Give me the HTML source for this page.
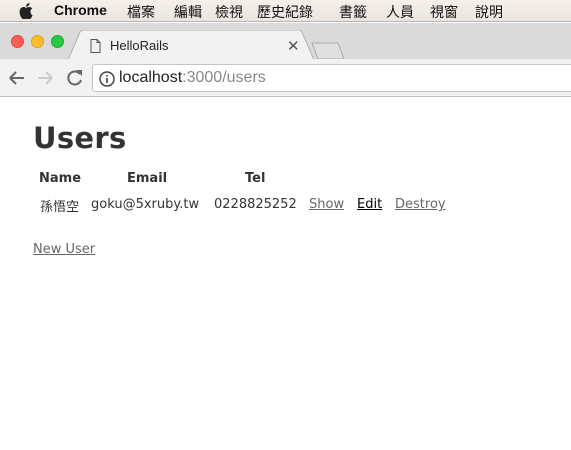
<!DOCTYPE html>
<html><head><meta charset="utf-8">
<style>
*{margin:0;padding:0;box-sizing:border-box}
body{width:571px;height:450px;overflow:hidden;background:#fff;font-family:"DejaVu Sans","Noto Sans CJK TC",sans-serif;position:relative}
.menu{position:absolute;left:0;top:0;width:571px;height:22px;background:linear-gradient(#f6f0ea,#ebe5df);border-bottom:1px solid #b8b4b0;font-family:"Liberation Sans","Noto Sans CJK TC",sans-serif;font-size:14px;color:#111}
.menu span{position:absolute;top:2px}
.tabs{position:absolute;left:0;top:23px;width:571px;height:37px;background:#dadada}
.toolbar{position:absolute;left:0;top:59px;width:571px;height:38px;background:#f2f2f2;border-bottom:1px solid #c0c0c0}
.dot{position:absolute;top:35px;width:13px;height:13px;border-radius:50%}
.addr{position:absolute;left:92px;top:64px;width:485px;height:28px;background:#fff;border:1px solid #c4c4c4;border-radius:3px;font-family:"Liberation Sans",sans-serif;font-size:16px;color:#222}
.page{position:absolute;left:0;top:97px;color:#333}
h1{position:absolute;left:33px;top:24px;font-size:29px;font-weight:bold;white-space:nowrap;letter-spacing:0.3px}
.t{position:absolute;font-size:13px;white-space:nowrap}
.b{font-weight:bold}
a{color:#666;text-decoration:underline}
</style></head><body>
<div class="menu">
<svg style="position:absolute;left:19px;top:3px" width="14" height="16" viewBox="0 0 14 16"><path d="M11.5 8.5c0-2 1.6-2.9 1.7-3-1-1.4-2.4-1.5-2.9-1.5-1.2-.1-2.4.7-3 .7s-1.6-.7-2.6-.7C3.3 4 2 4.8 1.3 6c-1.5 2.6-.4 6.400 1 8.500.7 1 1.500 2.100 2.500 2 1-.1 1.400-.6 2.600-.6s1.500.6 2.600.6c1.100 0 1.700-1 2.400-2 .8-1.100 1.100-2.200 1.100-2.300 0 0-2-.8-2-3.200zM9.600 2.600c.5-.7.900-1.600.8-2.600-.8 0-1.800.5-2.400 1.200-.5.600-1 1.500-.8 2.500.9.100 1.800-.4 2.400-1.100z" fill="#222"/></svg>
<span style="left:54px;font-weight:bold">Chrome</span>
<span style="left:127px">檔案</span><span style="left:174px">編輯</span><span style="left:215px">檢視</span><span style="left:257px">歷史紀錄</span><span style="left:339px">書籤</span><span style="left:386px">人員</span><span style="left:430px">視窗</span><span style="left:475px">說明</span>
</div>
<div class="tabs"></div>
<div class="dot" style="left:11px;background:#fc5f57;border:1px solid #e0443e"></div>
<div class="dot" style="left:31px;background:#fdbc2e;border:1px solid #dea123"></div>
<div class="dot" style="left:51px;background:#28c840;border:1px solid #1aab29"></div>
<svg style="position:absolute;left:68px;top:30px" width="290" height="30"><path d="M0 30 L12 2 Q13 0 16 0 L230 0 Q233 0 234 2 L246 30 Z" fill="#f2f2f2" stroke="#b0b0b0"/><path d="M244 13 L270 13 L276 29 L250 29 Z" fill="#e0e0e0" stroke="#aaa"/></svg>
<svg style="position:absolute;left:90px;top:39px" width="11" height="14"><path d="M1 .5h6l3 3v10H1z M7 .5v3h3" fill="none" stroke="#555"/></svg>
<div style="position:absolute;left:110px;top:38px;font-family:'Liberation Sans',sans-serif;font-size:13px;color:#222">HelloRails</div>
<div style="position:absolute;left:287px;top:37px;font-family:'Liberation Sans',sans-serif;font-size:15px;color:#555">✕</div>
<div class="toolbar"></div>
<svg style="position:absolute;left:8px;top:68px" width="75" height="20"><path d="M2 10h14M2 10l6-6M2 10l6 6" stroke="#666" stroke-width="2" fill="none"/><path d="M30 10h14M44 10l-6-6M44 10l-6 6" stroke="#ccc" stroke-width="2" fill="none"/><path d="M72 6A6.5 6.5 0 1 0 73 12" stroke="#666" stroke-width="2" fill="none"/><path d="M68 2l6 0 0 6z" fill="#666"/></svg>
<div class="addr">
<svg style="position:absolute;left:6px;top:6px" width="16" height="16"><circle cx="8" cy="8" r="7" fill="none" stroke="#444" stroke-width="1.5"/><rect x="7.2" y="7" width="1.6" height="5" fill="#444"/><rect x="7.2" y="4" width="1.6" height="1.6" fill="#444"/></svg>
<span style="position:absolute;left:26px;top:4px">localhost<span style="color:#888">:3000/users</span></span>
</div>
<div class="page">
<h1>Users</h1>
<div class="t b" style="left:39px;top:74px">Name</div>
<div class="t b" style="left:127px;top:74px">Email</div>
<div class="t b" style="left:245px;top:74px">Tel</div>
<div class="t" style="left:40px;top:99px">孫悟空</div>
<div class="t" style="left:91px;top:100px">goku@5xruby.tw</div>
<div class="t" style="left:214px;top:100px">0228825252</div>
<div class="t" style="left:309px;top:100px"><a>Show</a></div>
<div class="t" style="left:357px;top:100px"><a style="color:#000">Edit</a></div>
<div class="t" style="left:395px;top:100px"><a>Destroy</a></div>
<div class="t" style="left:33px;top:145px"><a>New User</a></div>
</div>
</body></html>
